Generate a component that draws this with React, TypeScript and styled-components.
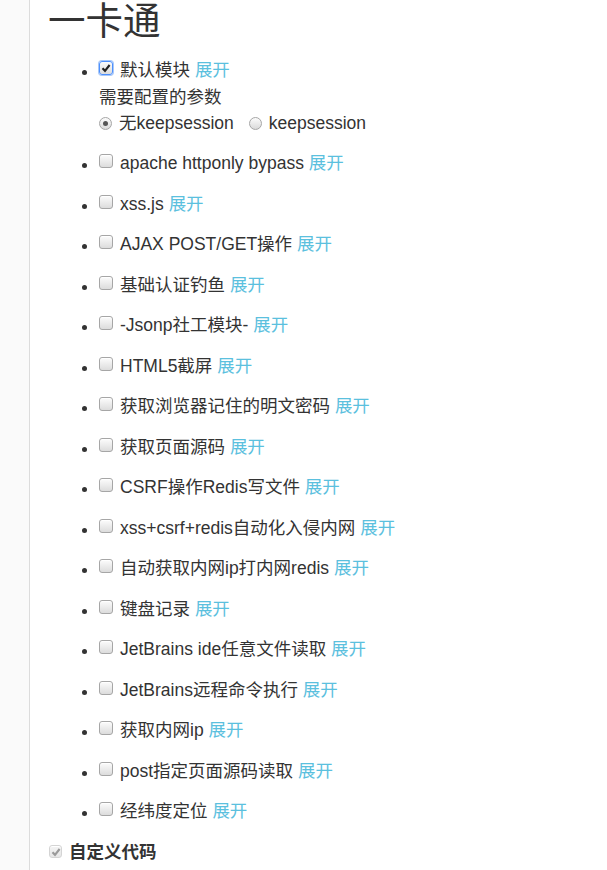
import React from "react";
import styled, { createGlobalStyle } from "styled-components";

const GlobalStyle = createGlobalStyle`
  html, body { margin: 0; padding: 0; background: #fff; }
  body {
    font-family: "Liberation Sans", Arial, "Noto Sans CJK SC", sans-serif;
    color: #333;
    font-size: 17.5px;
  }
`;

const Page = styled.div`
  display: flex;
  min-height: 870px;
  overflow: hidden;
`;

const Sidebar = styled.div`
  width: 29px;
  flex-shrink: 0;
  background: #fafafa;
  border-right: 1px solid #dcdcdc;
`;

const Main = styled.div`
  flex: 1;
  padding-left: 18px;
`;

const Title = styled.h2`
  margin: 1px 0 0 0;
  font-size: 37.5px;
  font-weight: 400;
  line-height: 41.25px;
  color: #333;
`;

const List = styled.ul`
  list-style: none;
  margin: 15px 0 0 0;
  padding: 0;
  display: flex;
  flex-direction: column;
  gap: 14.25px;
`;

const Item = styled.li`
  display: flex;
  align-items: flex-start;
`;

const Bullet = styled.span`
  width: 5px;
  height: 5px;
  border-radius: 50%;
  background: #333;
  margin: 13px 12px 0 34px;
  flex-shrink: 0;
`;

const Body = styled.div`
  display: flex;
  flex-direction: column;
`;

const Line = styled.div`
  display: flex;
  align-items: flex-start;
  height: 26.25px;
  line-height: 26.25px;
  white-space: nowrap;
`;

const Box = styled.span<{ $checked?: boolean; $focus?: boolean; $disabled?: boolean; $size?: number }>`
  width: ${(p) => p.$size ?? 14}px;
  height: ${(p) => p.$size ?? 14}px;
  box-sizing: border-box;
  flex-shrink: 0;
  border-radius: 3px;
  border: 1px solid ${(p) => (p.$focus ? "#4d90fe" : p.$disabled ? "#d4d4d4" : "#a6a6a6")};
  background: ${(p) =>
    p.$disabled ? "linear-gradient(#f4f4f4, #e6e6e6)" : "linear-gradient(#fcfcfc, #dcdcdc)"};
  box-shadow: ${(p) => (p.$focus ? "0 0 0 1px #a8c8f8" : "inset 0 1px 0 #fff")};
  display: flex;
  align-items: center;
  justify-content: center;
  margin-top: 4px;
  margin-right: 7px;
`;

const Radio = styled.span<{ $checked?: boolean }>`
  width: 13px;
  height: 13px;
  box-sizing: border-box;
  flex-shrink: 0;
  border-radius: 50%;
  border: 1px solid #a6a6a6;
  background: linear-gradient(#fcfcfc, #dadada);
  display: flex;
  align-items: center;
  justify-content: center;
  margin-top: 7px;
  margin-right: 7px;
  &::after {
    content: "";
    display: ${(p) => (p.$checked ? "block" : "none")};
    width: 5px;
    height: 5px;
    border-radius: 50%;
    background: #555;
  }
`;

const RadioOption = styled.label`
  display: flex;
  align-items: flex-start;
  margin-right: 15px;
`;

const Label = styled.span``;

const Expand = styled.a`
  color: #5bc0de;
  text-decoration: none;
  cursor: pointer;
`;

const Footer = styled.div`
  display: flex;
  align-items: flex-start;
  height: 26.25px;
  line-height: 26.25px;
  margin-top: 14.5px;
  font-weight: 700;
`;

const FooterBox = styled(Box)`
  margin-top: 6px;
  margin-left: 1px;
`;

const Check = ({ color = "#222" }: { color?: string }) => (
  <svg width="10" height="10" viewBox="0 0 10 10">
    <path d="M1.5 5.2 L4 7.8 L8.6 2" fill="none" stroke={color} strokeWidth="2.1" />
  </svg>
);

const items = [
  "apache httponly bypass",
  "xss.js",
  "AJAX POST/GET操作",
  "基础认证钓鱼",
  "-Jsonp社工模块-",
  "HTML5截屏",
  "获取浏览器记住的明文密码",
  "获取页面源码",
  "CSRF操作Redis写文件",
  "xss+csrf+redis自动化入侵内网",
  "自动获取内网ip打内网redis",
  "键盘记录",
  "JetBrains ide任意文件读取",
  "JetBrains远程命令执行",
  "获取内网ip",
  "post指定页面源码读取",
  "经纬度定位",
];

export default function App() {
  return (
    <>
      <GlobalStyle />
      <Page>
        <Sidebar />
        <Main>
          <Title>一卡通</Title>
          <List>
            <Item>
              <Bullet />
              <Body>
                <Line>
                  <Box $checked $focus>
                    <Check />
                  </Box>
                  <Label>
                    默认模块 <Expand>展开</Expand>
                  </Label>
                </Line>
                <Line>需要配置的参数</Line>
                <Line>
                  <RadioOption>
                    <Radio $checked />
                    无keepsession
                  </RadioOption>
                  <RadioOption>
                    <Radio />
                    keepsession
                  </RadioOption>
                </Line>
              </Body>
            </Item>
            {items.map((t) => (
              <Item key={t}>
                <Bullet />
                <Body>
                  <Line>
                    <Box />
                    <Label>
                      {t} <Expand>展开</Expand>
                    </Label>
                  </Line>
                </Body>
              </Item>
            ))}
          </List>
          <Footer>
            <FooterBox $checked $disabled $size={13}>
              <Check color="#9a9a9a" />
            </FooterBox>
            自定义代码
          </Footer>
        </Main>
      </Page>
    </>
  );
}
